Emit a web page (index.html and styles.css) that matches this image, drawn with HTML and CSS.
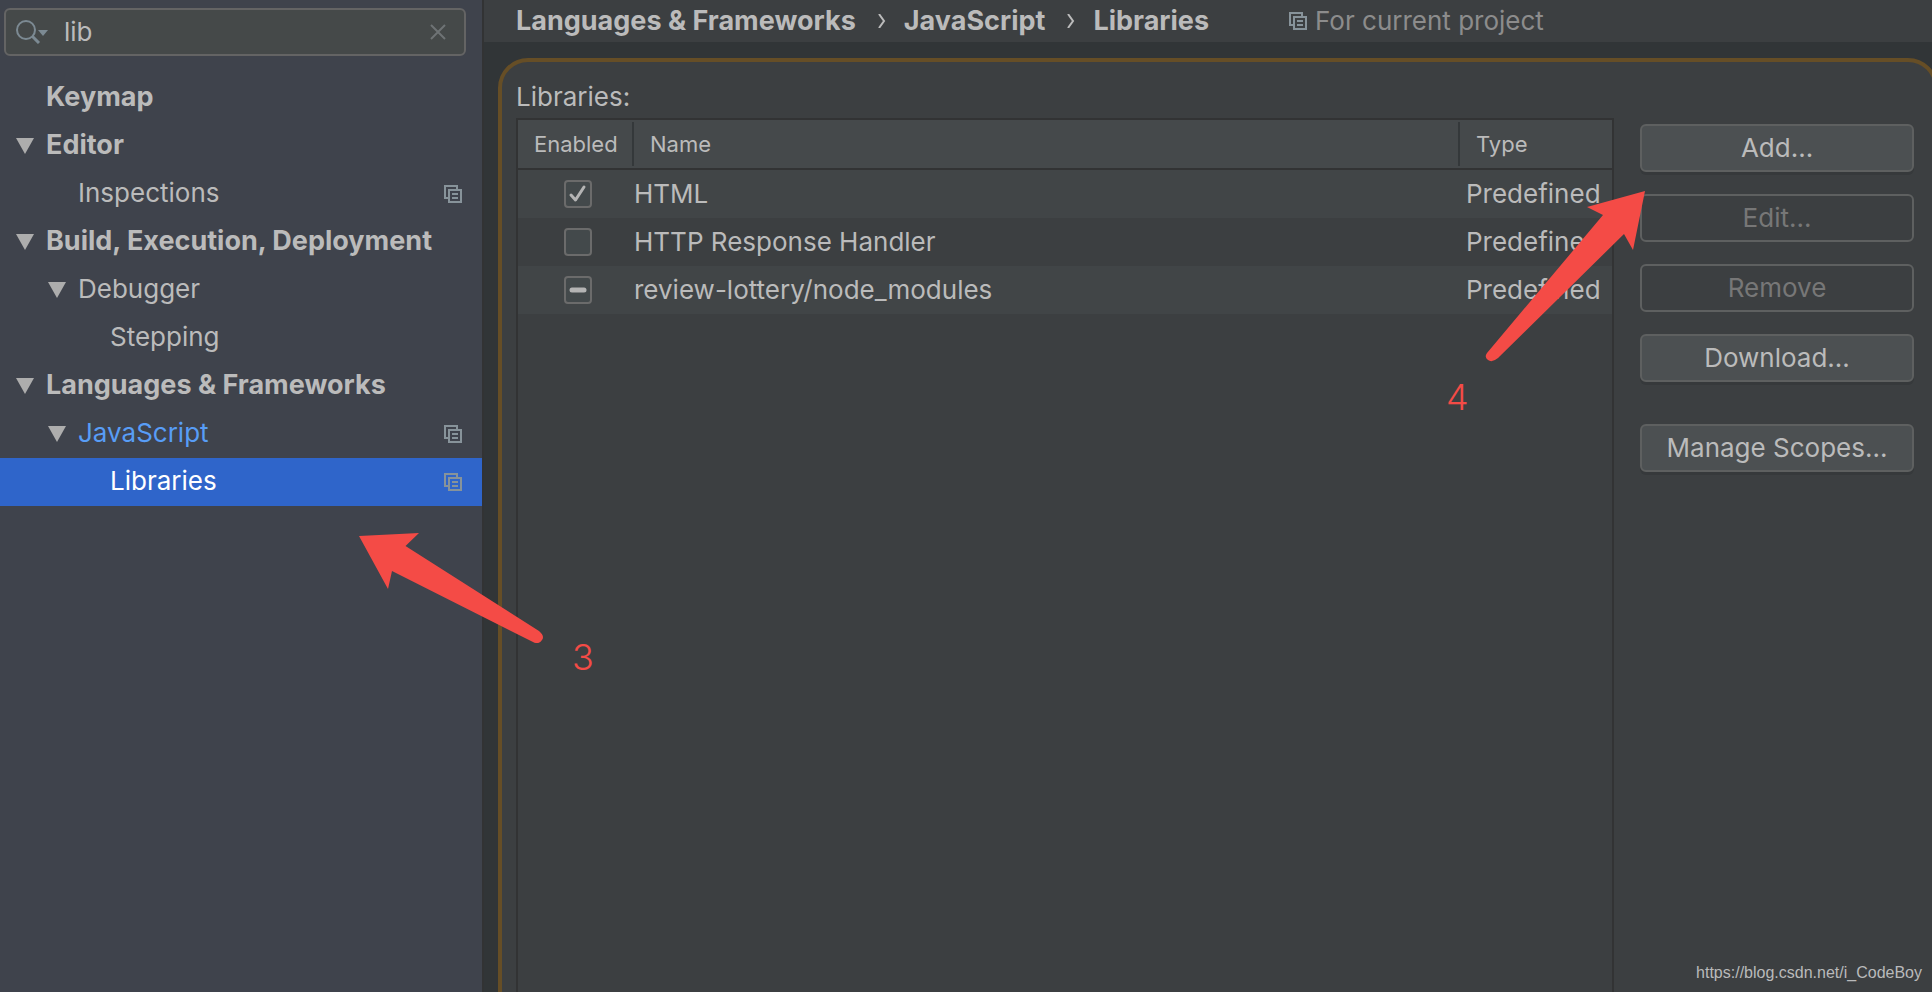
FILE: index.html
```html
<!DOCTYPE html>
<html lang="en">
<head>
<meta charset="utf-8">
<title>Preferences</title>
<link rel="stylesheet" href="styles.css">
</head>
<body>
<svg class="defs" aria-hidden="true">
  <symbol id="project" viewBox="0 0 18 18"><path d="M4 13H1V1H13V4M5 5H17V17H5ZM8 9H14M8 13H14" fill="none" stroke="currentColor" stroke-width="2"/></symbol>
  <symbol id="arrow-down" viewBox="0 0 18 16"><path d="M0 0H18L9 16Z" fill="currentColor"/></symbol>
  <symbol id="chevron" viewBox="0 0 8 14"><path d="M1 0L6 7L1 14" fill="none" stroke="currentColor" stroke-width="2"/></symbol>
</svg>
<div class="window">
  <aside class="sidebar">
    <div class="search">
      <svg class="search-icon" viewBox="0 0 32 24" aria-hidden="true"><circle cx="10" cy="10" r="9" fill="none" stroke="currentColor" stroke-width="2"/><path d="M16.500 16.500L23 23" stroke="currentColor" stroke-width="3"/><path d="M22 10H32L27 16Z" fill="currentColor"/></svg>
      <input class="search-input" type="text" value="lib" aria-label="Search settings">
      <button class="clear" aria-label="Clear search"><svg viewBox="0 0 16 16" aria-hidden="true"><path d="M1 1L15 15M15 1L1 15" stroke="currentColor" stroke-width="2"/></svg></button>
    </div>
    <nav class="tree">
      <a class="node bold" href="#"><span class="toggle"></span><span class="label">Keymap</span></a>
      <a class="node bold" href="#"><span class="toggle"><svg><use href="#arrow-down"/></svg></span><span class="label">Editor</span></a>
      <a class="node level-1" href="#"><span class="toggle"></span><span class="label">Inspections</span><svg class="project"><use href="#project"/></svg></a>
      <a class="node bold" href="#"><span class="toggle"><svg><use href="#arrow-down"/></svg></span><span class="label">Build, Execution, Deployment</span></a>
      <a class="node level-1" href="#"><span class="toggle"><svg><use href="#arrow-down"/></svg></span><span class="label">Debugger</span></a>
      <a class="node level-2" href="#"><span class="toggle"></span><span class="label">Stepping</span></a>
      <a class="node bold" href="#"><span class="toggle"><svg><use href="#arrow-down"/></svg></span><span class="label">Languages &amp; Frameworks</span></a>
      <a class="node level-1 modified" href="#"><span class="toggle"><svg><use href="#arrow-down"/></svg></span><span class="label">JavaScript</span><svg class="project"><use href="#project"/></svg></a>
      <a class="node level-2 selected" href="#" aria-current="page"><span class="toggle"></span><span class="label">Libraries</span><svg class="project"><use href="#project"/></svg></a>
    </nav>
  </aside>
  <main class="content">
    <header class="breadcrumbs">
      <span class="crumb">Languages &amp; Frameworks</span>
      <svg class="chevron"><use href="#chevron"/></svg>
      <span class="crumb">JavaScript</span>
      <svg class="chevron"><use href="#chevron"/></svg>
      <span class="crumb">Libraries</span>
      <span class="scope"><svg class="project"><use href="#project"/></svg>For current project</span>
    </header>
    <section class="panel">
      <h1 class="panel-title" id="libraries">Libraries:</h1>
      <div class="panel-body">
        <div class="table-frame">
          <table class="table" aria-labelledby="libraries">
            <thead>
              <tr><th class="col-enabled"><span>Enabled</span></th><th><span>Name</span></th><th class="col-type"><span>Type</span></th></tr>
            </thead>
            <tbody>
              <tr><td class="enabled"><span class="check"><input type="checkbox" checked aria-label="HTML"><svg viewBox="0 0 28 28" aria-hidden="true"><path d="M7 15L11.500 20L20 7" fill="none" stroke="currentColor" stroke-width="3" stroke-linecap="round" stroke-linejoin="round"/></svg></span></td><td>HTML</td><td>Predefined</td></tr>
              <tr><td class="enabled"><span class="check"><input type="checkbox" aria-label="HTTP Response Handler"></span></td><td>HTTP Response Handler</td><td>Predefined</td></tr>
              <tr><td class="enabled"><span class="check"><input type="checkbox" aria-label="review-lottery/node_modules"><svg viewBox="0 0 28 28" aria-hidden="true"><path d="M8 14H20" stroke="currentColor" stroke-width="5" stroke-linecap="round"/></svg></span></td><td>review-lottery/node_modules</td><td>Predefined</td></tr>
            </tbody>
          </table>
        </div>
        <div class="actions">
          <button class="button">Add...</button>
          <button class="button" disabled>Edit...</button>
          <button class="button" disabled>Remove</button>
          <button class="button">Download...</button>
          <button class="button spaced">Manage Scopes...</button>
        </div>
      </div>
    </section>
  </main>
  <svg class="note arrow-3" viewBox="0 0 184 110" aria-hidden="true"><path d="M0 3L60 0L46.500 13L180 98Q186 103 183 107Q180 112 174 109L33 38L29 56Z" fill="currentColor"/></svg>
  <span class="note number-3">3</span>
  <svg class="note arrow-4" viewBox="0 0 160 171" aria-hidden="true"><path d="M160 0L102 16L118 24L2 162Q-1 166 3 169Q7 172 13 167L139 43L148 59Z" fill="currentColor"/></svg>
  <span class="note number-4">4</span>
  <span class="note watermark">https://blog.csdn.net/i_CodeBoy</span>
</div>
</body>
</html>
```

FILE: styles.css
```css
* { box-sizing: border-box; }

body {
  margin: 0;
  background: #3c3f41;
  color: #bbbbbb;
  font: 26px/48px Inter, "Liberation Sans", sans-serif;
}

.defs { display: none; }

.window {
  position: relative;
  display: flex;
  height: 100vh;
  overflow: hidden;
}

.sidebar {
  flex: 0 0 484px;
  min-width: 0;
  background: #3f434c;
  border-right: 2px solid #323334;
}

.search {
  display: flex;
  align-items: center;
  height: 48px;
  margin: 8px 16px 18px 4px;
  padding: 0 18px 0 10px;
  background: #454949;
  border: 2px solid #646464;
  border-radius: 6px;
}

.search-icon { flex: none; width: 32px; height: 24px; color: #7c8a93; }

.search-input {
  flex: 1;
  width: 0;
  min-width: 0;
  margin-left: 16px;
  padding: 0;
  border: 0;
  outline: 0;
  background: none;
  color: inherit;
  font: inherit;
  line-height: 32px;
}

.clear {
  display: flex;
  padding: 0;
  border: 0;
  background: none;
  color: #6e7375;
}

.clear svg { width: 16px; height: 16px; }

.node {
  display: flex;
  align-items: center;
  height: 48px;
  padding: 0 20px 0 16px;
  color: inherit;
  line-height: 46px;
  text-decoration: none;
}

.level-1 { padding-left: 48px; }
.level-2 { padding-left: 80px; }

.toggle {
  display: flex;
  flex: 0 0 30px;
  color: #adadad;
}

.toggle svg { width: 18px; height: 16px; }
.label { flex: 1; height: 48px; white-space: nowrap; }
.bold { font-size: 27px; font-weight: 700; }
.modified .label { color: #589df6; }
.selected { background: #2f65ca; color: #ffffff; }

.project { flex: none; width: 18px; height: 18px; color: #87939a; }

.content {
  display: flex;
  flex: 1;
  flex-direction: column;
  min-width: 0;
  background: #313537;
}

.breadcrumbs {
  display: flex;
  align-items: center;
  height: 42px;
  padding-left: 32px;
  background: #3c3f41;
  line-height: 42px;
  white-space: nowrap;
}

.crumb { font-size: 27px; font-weight: 700; }
.chevron { width: 8px; height: 14px; margin: 0 18px 0 22px; }

.scope {
  display: flex;
  align-items: center;
  gap: 8px;
  margin-left: 80px;
  color: #8c8c8c;
}

.panel {
  display: flex;
  flex: 1;
  flex-direction: column;
  margin: 16px -6px -40px 14px;
  padding: 16px 20px 0 14px;
  background: #3c3f41;
  border: 4px solid #664e26;
  border-radius: 30px;
}

.panel-title {
  margin: 0;
  padding-bottom: 2px;
  font-size: 26px;
  font-weight: 400;
  line-height: 38px;
}

.panel-body { display: flex; flex: 1; gap: 26px; }

.table-frame { flex: 1; border: 2px solid #323334; }

.table {
  width: 100%;
  border-collapse: separate;
  border-spacing: 0;
  table-layout: fixed;
}

.table th {
  height: 50px;
  padding: 2px 0;
  background: #45494b;
  border-bottom: 2px solid #323334;
  font-size: 22px;
  font-weight: 400;
  line-height: 44px;
  text-align: left;
}

.table th span {
  display: block;
  padding-left: 16px;
  border-right: 2px solid #34383a;
}

.table th:last-child span { border-right: 0; }
.col-enabled { width: 116px; }
.col-type { width: 152px; }

.table td { height: 48px; padding: 0; white-space: nowrap; }
.table td + td + td { padding-left: 6px; }
.table tbody tr:nth-child(odd) { background: #414547; }
.table td.enabled { padding-left: 46px; }

.check { display: grid; width: 28px; height: 28px; color: #b4b4b4; }

.check input {
  grid-area: 1 / 1;
  appearance: none;
  width: 28px;
  height: 28px;
  margin: 0;
  background: #43494b;
  border: 2px solid #6b6b6b;
  border-radius: 4px;
}

.check svg { grid-area: 1 / 1; width: 28px; height: 28px; pointer-events: none; }

.actions {
  display: flex;
  flex: 0 0 274px;
  flex-direction: column;
  gap: 22px;
  padding-top: 6px;
}

.button {
  height: 48px;
  padding: 0;
  background: #4c5052;
  border: 2px solid #5e6060;
  border-radius: 6px;
  box-shadow: 0 3px 0 #36393b;
  color: #bbbbbb;
  font: inherit;
  line-height: 44px;
}

.button:disabled { background: none; box-shadow: none; color: #777777; }
.spaced { margin-top: 20px; }

.note { position: absolute; color: #f44b46; pointer-events: none; }
.arrow-3 { left: 359px; top: 533px; width: 184px; height: 110px; }
.number-3 { left: 572px; top: 633px; font-size: 36px; font-weight: 300; }
.arrow-4 { left: 1485px; top: 191px; width: 160px; height: 171px; }
.number-4 { left: 1446px; top: 373px; font-size: 36px; font-weight: 300; }

.watermark {
  right: 10px;
  bottom: 6px;
  color: #b9babb;
  font: 16px/26px "Liberation Sans", Arial, sans-serif;
}
```
